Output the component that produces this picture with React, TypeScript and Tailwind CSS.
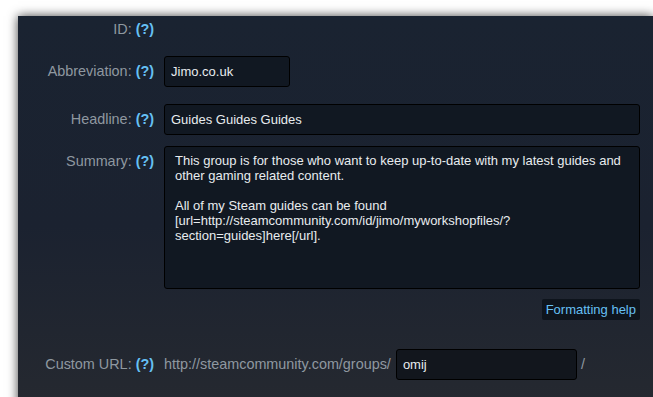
import React from 'react';

const Help: React.FC = () => (
  <span className="font-bold text-[#66c0f4]">(?)</span>
);

const Label: React.FC<{ text: string }> = ({ text }) => (
  <div className="w-[136px] shrink-0 text-right text-[14.4px] text-[#8f98a0]">
    {text}: <Help />
  </div>
);

const summary =
  'This group is for those who want to keep up-to-date with my latest guides and other gaming related content.\n\nAll of my Steam guides can be found\n[url=http://steamcommunity.com/id/jimo/myworkshopfiles/?\nsection=guides]here[/url].';

const App: React.FC = () => {
  return (
    <div className="h-[397px] w-full overflow-hidden bg-white font-['Liberation_Sans',Arial,sans-serif] text-[13px]">
      <div className="ml-[18px] mt-[16px] h-[420px] bg-gradient-to-b from-[#1a2331] via-[#1b2230] to-[#272a30] pt-[5px] shadow-[0_0_10px_rgba(0,0,0,0.75)]">
        <div className="flex h-[17px] items-center gap-[10px]">
          <Label text="ID" />
        </div>

        <div className="mt-[18px] flex items-center gap-[10px]">
          <Label text="Abbreviation" />
          <input
            defaultValue="Jimo.co.uk"
            className="h-[31px] w-[126px] rounded-[3px] border border-black bg-[#111822] px-[6px] text-[13px] text-[#e8ecef] outline-none"
          />
        </div>

        <div className="mt-[17px] flex items-center gap-[10px]">
          <Label text="Headline" />
          <input
            defaultValue="Guides Guides Guides"
            className="h-[31px] w-[476px] rounded-[3px] border border-black bg-[#111822] px-[6px] text-[13px] text-[#e8ecef] outline-none"
          />
        </div>

        <div className="mt-[11px] flex items-start gap-[10px]">
          <div className="pt-[5px]">
            <Label text="Summary" />
          </div>
          <textarea
            defaultValue={summary}
            className="h-[143px] w-[476px] resize-none overflow-hidden rounded-[3px] border border-black bg-[#111822] px-[10px] py-[6px] text-[13px] leading-[15px] text-[#e8ecef] outline-none"
          />
        </div>

        <div className="mt-[10px] flex w-[622px] justify-end">
          <button className="h-[21px] rounded-[2px] bg-[#0e141c] px-[4px] text-[13px] text-[#66c0f4]">
            Formatting help
          </button>
        </div>

        <div className="mt-[29px] flex items-center">
          <Label text="Custom URL" />
          <span className="ml-[10px] text-[14.4px] text-[#8f98a0]">http://steamcommunity.com/groups/</span>
          <input
            defaultValue="omij"
            className="ml-[5px] h-[31px] w-[181px] rounded-[3px] border border-black bg-[#12161d] px-[6px] text-[13px] text-[#e8ecef] outline-none"
          />
          <span className="ml-[4px] text-[14.4px] text-[#8f98a0]">/</span>
        </div>
      </div>
    </div>
  );
};

export default App;
